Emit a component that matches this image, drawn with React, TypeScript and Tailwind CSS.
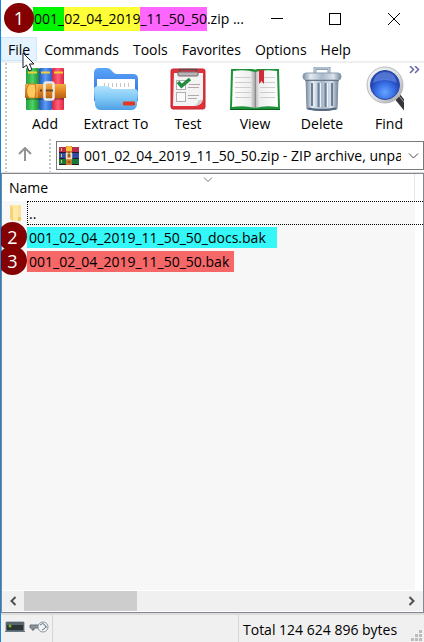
import { useState } from "react";

const tools = [
	{ label: "Add", width: "w-[60px]", icon: <BooksIcon /> },
	{ label: "Extract To", width: "w-[82px]", icon: <FolderIcon /> },
	{ label: "Test", width: "w-[62px]", icon: <ClipboardIcon /> },
	{ label: "View", width: "w-[72px]", icon: <BookIcon /> },
	{ label: "Delete", width: "w-[62px]", icon: <TrashIcon /> },
	{ label: "Find", width: "w-[72px]", icon: <FindIcon /> },
];

const menus = ["File", "Commands", "Tools", "Favorites", "Options", "Help"];

function BooksIcon() {
	return (
		<svg width="42" height="44" viewBox="0 0 42 44">
			<defs>
				<linearGradient id="bookGreen">
					<stop offset="0" stopColor="#23a13c" />
					<stop offset=".5" stopColor="#4fd166" />
					<stop offset="1" stopColor="#1b8c35" />
				</linearGradient>
				<linearGradient id="bookBlue">
					<stop offset="0" stopColor="#2356b4" />
					<stop offset=".5" stopColor="#5b9bf5" />
					<stop offset="1" stopColor="#2c5fc4" />
				</linearGradient>
				<linearGradient id="bookRed">
					<stop offset="0" stopColor="#d42549" />
					<stop offset=".5" stopColor="#ff5f75" />
					<stop offset="1" stopColor="#dc2443" />
				</linearGradient>
				<linearGradient id="strap" x2="0" y2="1">
					<stop offset="0" stopColor="#f3ae48" />
					<stop offset=".5" stopColor="#e08524" />
					<stop offset="1" stopColor="#b9610f" />
				</linearGradient>
			</defs>
			<rect x="2" y="1" width="13" height="42" rx="1" fill="url(#bookGreen)" />
			<rect x="15" y="1" width="13" height="42" rx="1" fill="url(#bookBlue)" />
			<rect x="28" y="1" width="12" height="42" rx="1" fill="url(#bookRed)" />
			<path d="M4 5.500h9M17 5.500h9M30 5.500h9" stroke="#f5cf3a" strokeWidth="2" />
			<path d="M2 32h38" stroke="#0004" strokeWidth="2" />
			<rect x="1" y="17" width="41" height="14" fill="url(#strap)" />
			<path d="M5 17q-5 7 0 14h6q2-7 0-14z" fill="#ffc95c" stroke="#c8791d" />
			<path d="M13 17v14" stroke="#f7c067" />
			<circle cx="17" cy="23.500" r="1" fill="#522a0b" />
			<circle cx="21" cy="23.500" r="1" fill="#522a0b" />
			<rect x="20.500" y="15.500" width="9" height="17" rx="2" fill="none" stroke="#eeeae2" strokeWidth="2.500" />
			<path d="M22 23.500h7" stroke="#6b4a2a" strokeWidth="2" />
		</svg>
	);
}

function FolderIcon() {
	return (
		<svg width="46" height="44" viewBox="0 0 46 44">
			<defs>
				<linearGradient id="folderBack" x2="0" y2="1">
					<stop offset="0" stopColor="#5aa5f8" />
					<stop offset="1" stopColor="#2a68d8" />
				</linearGradient>
				<linearGradient id="folderFront" x2="0" y2="1">
					<stop offset="0" stopColor="#b3e3fd" />
					<stop offset=".5" stopColor="#80c8f5" />
					<stop offset="1" stopColor="#4f9fe4" />
				</linearGradient>
			</defs>
			<path d="M1 6q0-5 5-5h8q3 0 5 3l2 2q1 1 3 1h16q5 0 5 5v22H1z" fill="url(#folderBack)" />
			<path d="M4 12h38v14H4z" fill="#fff" />
			<path d="M11.500 16v4M15.500 16v4M19.500 16v4M23.500 16v4M27.500 16v4M31.500 16v4M35.500 16v4" stroke="#c3c6cb" />
			<path d="M1 23q0-4 4-4h8q3 0 4 1.500t4 1.500h20q4 0 4 4l-1 12q-1 5-6 5H8q-5 0-6-5z" fill="url(#folderFront)" />
			<rect x="30" y="34.500" width="12" height="4" rx="1" fill="#e5371f" />
		</svg>
	);
}

function ClipboardIcon() {
	return (
		<svg width="36" height="44" viewBox="0 0 36 44">
			<rect x="1" y="2" width="34" height="40" rx="2" fill="#e0323b" stroke="#c0242e" />
			<path d="M4 6h29v26q-1 7-9 7H3z" fill="#f3f3f3" />
			<path d="M33 31q-1 8-10 8 6-2 5-6 4 1 5-2z" fill="#cfcfcf" />
			<path d="M9.500 6V2.500h17V6" fill="none" stroke="#5d4a4e" strokeWidth="1.500" />
			<rect x="8" y="5" width="20" height="4" rx="1" fill="#b9b4b6" stroke="#76686c" />
			<rect x="6.500" y="13.500" width="9" height="9" fill="#fff" stroke="#b0b0b0" />
			<rect x="6.500" y="25.500" width="9" height="9" fill="#fafafa" stroke="#b0b0b0" />
			<path d="M8 15l3.500 4 8.500-7" fill="none" stroke="#1f8d3e" strokeWidth="3.500" />
			<path d="M19 17.500h11M18 20.500h11M18 28.500h11M18 31.500h9" stroke="#b5a7ad" />
		</svg>
	);
}

function BookIcon() {
	return (
		<svg width="52" height="44" viewBox="0 0 52 44">
			<defs>
				<linearGradient id="pageLeft">
					<stop offset="0" stopColor="#fff" />
					<stop offset=".8" stopColor="#eee" />
					<stop offset="1" stopColor="#a5a5a5" />
				</linearGradient>
				<linearGradient id="pageRight">
					<stop offset="0" stopColor="#b3b3b3" />
					<stop offset=".2" stopColor="#eee" />
					<stop offset="1" stopColor="#fff" />
				</linearGradient>
			</defs>
			<path d="M2 2h22q2 1 4 0h22l1 40H1z" fill="#1d9239" />
			<path d="M1 42.500h50" stroke="#0b5f1e" />
			<path d="M4 4q12-2 22 1v36q-10-3-23-1z" fill="url(#pageLeft)" />
			<path d="M26 5q10-3 22-1l1 36q-13-2-23 1z" fill="url(#pageRight)" />
			<path d="M26.500 5v36" stroke="#8a8a8a" />
			<path d="M6 10.500h16M6 15.500h16M6 20.500h16M6 25.500h16M6 30.500h16M31 10.500h15M31 15.500h15M31 20.500h15M31 25.500h15M31 30.500h15" stroke="#cdcdcd" />
			<path d="M30 3h5v14l-2.500-3-2.500 3z" fill="#d42a35" />
		</svg>
	);
}

function TrashIcon() {
	return (
		<svg width="40" height="46" viewBox="0 0 40 46">
			<defs>
				<linearGradient id="metal">
					<stop offset="0" stopColor="#7b8da2" />
					<stop offset=".2" stopColor="#e4ebf3" />
					<stop offset=".5" stopColor="#a9b8c9" />
					<stop offset=".8" stopColor="#dbe3ec" />
					<stop offset="1" stopColor="#74869b" />
				</linearGradient>
			</defs>
			<path d="M13 7V2.500h14V7" fill="none" stroke="#8c9eb2" strokeWidth="3" />
			<path d="M13 7V2h14v5" fill="none" stroke="#d2dce6" />
			<path d="M4 13h32l-1 30q-15 3-30 0z" fill="url(#metal)" stroke="#7b8da1" />
			<path d="M10 17v23M16.500 17v24M23.500 17v24M30 17v23" stroke="#6b8098" strokeWidth="2" />
			<path d="M12 17v23M18.500 17v24M25.500 17v24" stroke="#edf3f8" />
			<rect x="1" y="7" width="38" height="7" rx="3" fill="url(#metal)" stroke="#8c9caf" />
			<path d="M3 14.500h34" stroke="#65788e" />
			<path d="M6 42.500q14 3 28 0" fill="none" stroke="#53677e" strokeWidth="2" />
		</svg>
	);
}

function FindIcon() {
	return (
		<svg width="46" height="46" viewBox="0 0 46 46">
			<defs>
				<radialGradient id="lens" cx=".5" cy=".75">
					<stop offset="0" stopColor="#63a5ff" />
					<stop offset=".6" stopColor="#3a70e6" />
					<stop offset="1" stopColor="#2448ba" />
				</radialGradient>
				<linearGradient id="rim" x2="1" y2="1">
					<stop offset="0" stopColor="#f8f8f8" />
					<stop offset=".6" stopColor="#d6d9dd" />
					<stop offset="1" stopColor="#979ba0" />
				</linearGradient>
			</defs>
			<path d="M30 29l13 16" stroke="#36363b" strokeWidth="7" />
			<path d="M33 30l9 11" stroke="#a2a2a6" />
			<circle cx="19" cy="19" r="18" fill="url(#rim)" stroke="#b6b9be" />
			<circle cx="19" cy="19" r="14.500" fill="url(#lens)" stroke="#2b489e" />
			<path d="M7 17q2-11 12-11t12 11q-12-6-24 0z" fill="#a7c5ff" opacity=".35" />
		</svg>
	);
}

function ArchiveIcon() {
	return (
		<svg width="20" height="20" viewBox="0 0 20 20" className="shrink-0">
			<path d="M0 1h20v5H0z" fill="#b82e4d" />
			<path d="M0 7h20v5H0z" fill="#314ca5" />
			<path d="M0 13h20v5H0z" fill="#16793b" />
			<path d="M0 6.500h20M0 12.500h20M0 18.500h20" stroke="#241924" />
			<path d="M2.500 2v3M2.500 8v3M2.500 14v3" stroke="#efc53a" />
			<path d="M7 0h6v19H7z" fill="#ca7627" />
			<path d="M7 1q3-2 6 0v4H7z" fill="#ffc13c" />
			<rect x="7.500" y="7.500" width="5" height="5" fill="#d58c37" stroke="#eee2c6" strokeWidth="1.500" />
			<path d="M10 6v5M10 15v2" stroke="#57351a" />
		</svg>
	);
}

function Badge({ value, className }: { value: number; className: string }) {
	return (
		<span className={`absolute z-10 flex items-center justify-center rounded-full bg-[#850000] text-lg leading-none text-white ${className}`}>
			{value}
		</span>
	);
}

function Grip() {
	return (
		<span className="w-[2px] shrink-0 self-stretch bg-[repeating-linear-gradient(to_bottom,#c8c8c8_0px,#c8c8c8_2px,#fff_2px,#fff_4px)]" />
	);
}

function TitleBar() {
	return (
		<header className="relative flex h-[37px] items-center pl-8">
			<Badge value={1} className="left-[3px] top-[3px] size-[30px]" />
			<h1 className="flex min-w-0 flex-1 whitespace-nowrap text-sm leading-6">
				<span className="bg-[#00f600] pl-px">001_</span>
				<span className="bg-[#ffff37]">02_04_2019</span>
				<span className="bg-[#ff65ff]">_11_50_50</span>
				<span>.zip ...</span>
			</h1>
			<button aria-label="Minimize" className="flex h-full w-[58px] items-center justify-center">
				<svg width="12" height="12"><path d="M0 5.500h12" stroke="#000" /></svg>
			</button>
			<button aria-label="Maximize" className="flex h-full w-[58px] items-center justify-center">
				<svg width="12" height="12"><rect x=".5" y=".5" width="11" height="11" fill="none" stroke="#000" /></svg>
			</button>
			<button aria-label="Close" className="flex h-full w-[60px] items-center justify-center">
				<svg width="12" height="12"><path d="M0 0l12 12M12 0L0 12" stroke="#000" /></svg>
			</button>
		</header>
	);
}

function MenuBar() {
	return (
		<nav className="relative flex h-6 items-stretch text-sm">
			{menus.map((name) => (
				<button
					key={name}
					className={`border px-[6px] pt-[2px] leading-none ${name === "File" ? "border-[#cce8ff] bg-[#e5f3ff]" : "border-transparent"}`}
				>
					{name}
				</button>
			))}
			<svg width="13" height="20" viewBox="0 0 13 20" className="absolute left-[21px] top-[15px] z-10">
				<path d="M1 1v15l3.500-3 2.500 6 3-1.300L7.500 12H12z" fill="#fff" stroke="#1b1b2b" />
			</svg>
		</nav>
	);
}

function Toolbar() {
	return (
		<div className="relative flex h-[78px] border-t-2 border-[#f0f0f0] pl-1">
			<Grip />
			<div className="mr-5 flex min-w-0 flex-1 overflow-hidden pl-2">
				{tools.map((tool) => (
					<button key={tool.label} className={`flex shrink-0 flex-col items-center ${tool.width}`}>
						<span className="flex h-[51px] items-center">{tool.icon}</span>
						<span className="whitespace-nowrap text-sm leading-5">{tool.label}</span>
					</button>
				))}
			</div>
			<button aria-label="More tools" className="absolute right-[4px] top-[3px]">
				<svg width="11" height="8" viewBox="0 0 11 8">
					<path d="M1 0l3.500 3.500L1 7M6 0l3.500 3.500L6 7" fill="none" stroke="#6767a8" strokeWidth="1.500" />
				</svg>
			</button>
		</div>
	);
}

function AddressBar() {
	return (
		<div className="flex h-[33px] pl-1">
			<Grip />
			<button aria-label="Up one level" className="flex w-[42px] items-center justify-center pb-1 pr-[6px]">
				<svg width="14" height="14" viewBox="0 0 14 14">
					<path d="M7 14V1M1 7l6-6 6 6" fill="none" stroke="#939393" strokeWidth="2" />
				</svg>
			</button>
			<Grip />
			<div className="relative ml-[5px] mt-[2px] flex h-[29px] min-w-0 flex-1 items-center border border-[#7a7a7a] pl-[2px]">
				<ArchiveIcon />
				<select
					aria-label="Address"
					className="mr-[22px] h-full min-w-0 flex-1 appearance-none overflow-hidden bg-transparent pl-[5px] text-sm outline-none"
				>
					<option>001_02_04_2019_11_50_50.zip - ZIP archive, unpacked size 124 624 896 bytes</option>
				</select>
				<svg width="11" height="6" viewBox="0 0 11 6" className="pointer-events-none absolute right-[4px] top-[11px]">
					<path d="M1 .5l4.500 4.500L10 .5" fill="none" stroke="#444" />
				</svg>
			</div>
		</div>
	);
}

function FileList() {
	const [selected, setSelected] = useState("..");
	const files = [
		{ name: "001_02_04_2019_11_50_50_docs.bak", fill: "bg-[#34f7f7]", pad: "pr-[11px]", badge: 2 },
		{ name: "001_02_04_2019_11_50_50.bak", fill: "bg-[#f66767]", pad: "pr-[5px]", badge: 3 },
	];

	return (
		<main className="flex flex-1 flex-col border border-[#828790]">
			<div className="flex flex-1">
				<div className="min-w-0 flex-1 bg-[#f7f7f7]">
					<table className="w-full border-collapse text-left text-sm">
						<thead>
							<tr className="h-[27px] bg-white">
								<th className="relative border-r border-[#e5e5e5] p-0 pl-[7px] font-normal">
									Name
									<svg width="9" height="5" viewBox="0 0 9 5" className="absolute left-1/2 top-[3px] -translate-x-1/2">
										<path d="M.5 .5l4 4 4-4" fill="none" stroke="#777" />
									</svg>
								</th>
							</tr>
						</thead>
						<tbody>
							<tr className="h-6" onClick={() => setSelected("..")}>
								<td className="p-0">
									<div className="-mr-2 flex items-center pl-[7px]">
										<svg width="14" height="18" viewBox="0 0 14 18">
											<path d="M1 1h8v12h3v4H3l-2-2z" fill="#ffe9a6" />
											<path d="M1 1l3 2v14l-3-2z" fill="#f3d37c" />
											<path d="M9 1h3v12H9z" fill="#fbe19a" />
											<path d="M9 13h3v4H9z" fill="#efc966" />
										</svg>
										<span className={`ml-1 h-6 flex-1 border border-r-0 border-dotted pl-px leading-6 ${selected === ".." ? "border-black" : "border-transparent"}`}>
											..
										</span>
									</div>
								</td>
							</tr>
							{files.map((file) => (
								<tr key={file.name} className="h-6" onClick={() => setSelected(file.name)}>
									<td className="relative p-0 pl-[25px]">
										<Badge value={file.badge} className="-left-[4px] -top-[3px] size-[29px]" />
										<span className={`inline-block whitespace-nowrap pl-[2px] align-middle leading-[21px] ${file.fill} ${file.pad}`}>
											{file.name}
										</span>
									</td>
								</tr>
							))}
						</tbody>
					</table>
				</div>
				<div className="w-2" />
			</div>
			<div className="flex h-[22px] items-stretch border-y border-white bg-[#f0f0f0]">
				<button aria-label="Scroll left" className="flex w-[22px] items-center justify-center">
					<svg width="8" height="10" viewBox="0 0 8 10"><path d="M6.500 1l-4 4 4 4" fill="none" stroke="#505050" strokeWidth="2" /></svg>
				</button>
				<div className="flex-1"><div className="h-full w-[30%] bg-[#cdcdcd]" /></div>
				<button aria-label="Scroll right" className="flex w-[22px] items-center justify-center">
					<svg width="8" height="10" viewBox="0 0 8 10"><path d="M1.500 1l4 4-4 4" fill="none" stroke="#505050" strokeWidth="2" /></svg>
				</button>
			</div>
		</main>
	);
}

function StatusBar() {
	return (
		<footer className="relative flex h-[29px] items-stretch border-t-2 border-[#dcdcdc] bg-[#f0f0f0] text-sm">
			<div className="flex w-[51px] gap-1 pl-1 pt-[6px]">
				<svg width="20" height="12" viewBox="0 0 20 12">
					<path d="M1 1h18v9H1z" fill="#2c3436" stroke="#84929c" />
					<path d="M2 2h16v2H2z" fill="#59666b" />
					<circle cx="5" cy="5" r="1.500" fill="#76b62d" />
					<path d="M0 10.500h20" stroke="#667782" />
				</svg>
				<svg width="20" height="12" viewBox="0 0 20 12">
					<path d="M10 4H1v3h2v2h2V7h5" fill="#8d959c" stroke="#69737c" />
					<circle cx="14" cy="6" r="5" fill="#f1f4f6" stroke="#8b979f" />
					<path d="M11 4q3-3 5 0t-3 5" fill="none" stroke="#65727a" />
					<path d="M16 6h2" stroke="#65727a" />
				</svg>
			</div>
			<div className="flex-1 border-l border-[#d5d5d5]" />
			<div className="w-[186px] border-l border-[#d5d5d5] pl-1 leading-[29px]">Total 124 624 896 bytes</div>
			<svg width="11" height="11" viewBox="0 0 11 11" className="absolute bottom-[1px] right-[2px]" fill="#bcbcbc">
				<path d="M8 0h3v3H8zM4 4h3v3H4zM8 4h3v3H8zM0 8h3v3H0zM4 8h3v3H4zM8 8h3v3H8z" />
			</svg>
		</footer>
	);
}

export default function App() {
	return (
		<div className="flex min-h-screen flex-col overflow-hidden border-l border-[#1883d7] bg-white font-['Open_Sans',sans-serif] text-black">
			<TitleBar />
			<MenuBar />
			<Toolbar />
			<AddressBar />
			<div className="h-[1px] bg-[#dcdcdc]" />
			<FileList />
			<StatusBar />
		</div>
	);
}
